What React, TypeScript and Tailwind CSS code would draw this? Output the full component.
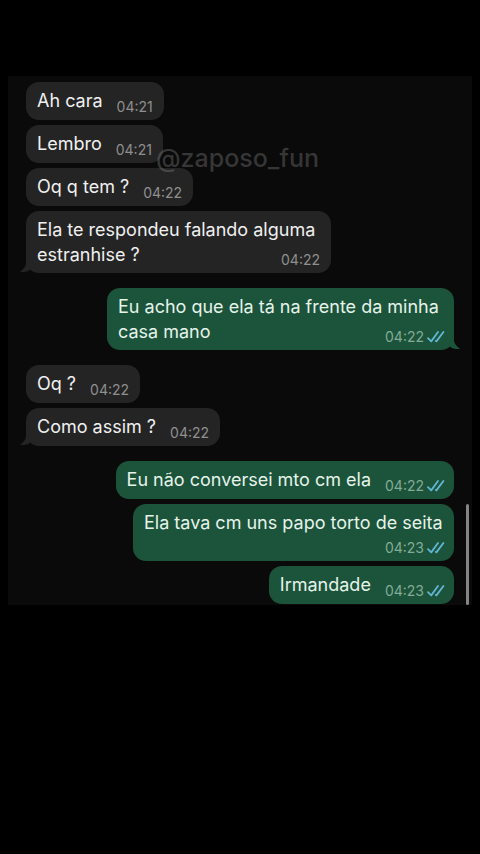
import clsx from "clsx";

interface Message {
  text: string;
  time: string;
  tail?: boolean;
  layout?: "inline" | "wrapped" | "stacked";
  width?: string;
}

interface MessageGroup {
  sent: boolean;
  messages: Message[];
}

const groups: MessageGroup[] = [
  {
    sent: false,
    messages: [
      { text: "Ah cara", time: "04:21" },
      { text: "Lembro", time: "04:21" },
      { text: "Oq q tem ?", time: "04:22" },
      {
        text: "Ela te respondeu falando alguma estranhise ?",
        time: "04:22",
        tail: true,
        layout: "wrapped",
        width: "w-[305px]",
      },
    ],
  },
  {
    sent: true,
    messages: [
      {
        text: "Eu acho que ela tá na frente da minha casa mano",
        time: "04:22",
        tail: true,
        layout: "wrapped",
        width: "w-[347px]",
      },
    ],
  },
  {
    sent: false,
    messages: [
      { text: "Oq ?", time: "04:22" },
      { text: "Como assim ?", time: "04:22", tail: true },
    ],
  },
  {
    sent: true,
    messages: [
      { text: "Eu não conversei mto cm ela", time: "04:22" },
      {
        text: "Ela tava cm uns papo torto de seita",
        time: "04:23",
        layout: "stacked",
        width: "w-[321px]",
      },
      { text: "Irmandade", time: "04:23" },
    ],
  },
];

// distance from the top of the last line to the time
const timeOffset = {
  inline: "mt-[11px]",
  wrapped: "mt-2.5",
  stacked: "mt-[5px]",
};

function ReadTicks() {
  return (
    <svg
      className="h-3 w-[18px]"
      viewBox="0 0 18 12"
      fill="none"
      stroke="#62b6d3"
      strokeWidth="1.8"
      strokeLinecap="round"
      strokeLinejoin="round"
      role="img"
      aria-label="Lida"
    >
      <path d="M1 7.2 4.2 10.4 11 1" />
      <path d="M8.8 9.9 9.4 10.4 16.4 1" />
    </svg>
  );
}

function Tail({ sent }: { sent: boolean }) {
  return (
    <svg
      className={clsx(
        "absolute bottom-0 h-4 w-[18px]",
        sent ? "-right-1.5 -scale-x-100 text-[#1b543b]" : "-left-1.5 text-[#242424]",
      )}
      viewBox="0 0 18 16"
      fill="currentColor"
      aria-hidden="true"
    >
      <path d="M6 0V7C5.500 10 3 12.500 0 15C4 15.400 7 14.800 9 13.600L16 6Z" />
    </svg>
  );
}

function Bubble({ message, sent }: { message: Message; sent: boolean }) {
  const { text, time, tail, layout = "inline", width } = message;
  return (
    <li
      className={clsx(
        "relative flow-root max-w-full rounded-[13px] px-[11px] pt-1.5 pb-[5px]",
        sent ? "bg-[#1b543b] text-[#e6f3ea]" : "bg-[#242424] text-[#f0f0f0]",
        width,
      )}
    >
      {tail && <Tail sent={sent} />}
      <span className="relative">{text}</span>
      <span
        className={clsx(
          "relative float-right ml-3.5 flex items-center text-[14px] leading-4",
          timeOffset[layout],
          sent ? "-mr-0.5 gap-[3px] text-[#83ab95]" : "text-[#8f8f8f]",
        )}
      >
        <time>{time}</time>
        {sent && <ReadTicks />}
      </span>
    </li>
  );
}

export default function App() {
  return (
    <div className="min-h-screen bg-black px-2 pt-[76px] font-['Inter','Liberation_Sans',sans-serif]">
      <main className="relative flex flex-col gap-[15px] bg-[#0a0a0a] px-[18px] pt-1.5 pb-px text-[18px] leading-[25px]">
        {groups.map((group, i) => (
          <ul
            key={i}
            className={clsx(
              "flex flex-col gap-[5px]",
              group.sent ? "items-end" : "items-start",
            )}
          >
            {group.messages.map((message) => (
              <Bubble key={message.text} message={message} sent={group.sent} />
            ))}
          </ul>
        ))}

        {/* Watermark */}
        <p className="absolute top-[68px] left-[148px] text-[25px] leading-7 font-medium text-[#8c8c8c]/35">
          @zaposo_fun
        </p>
        {/* Scroll thumb */}
        <div className="absolute right-[3px] bottom-0 h-[101px] w-[3px] rounded-full bg-[#858585]" />
      </main>
    </div>
  );
}
